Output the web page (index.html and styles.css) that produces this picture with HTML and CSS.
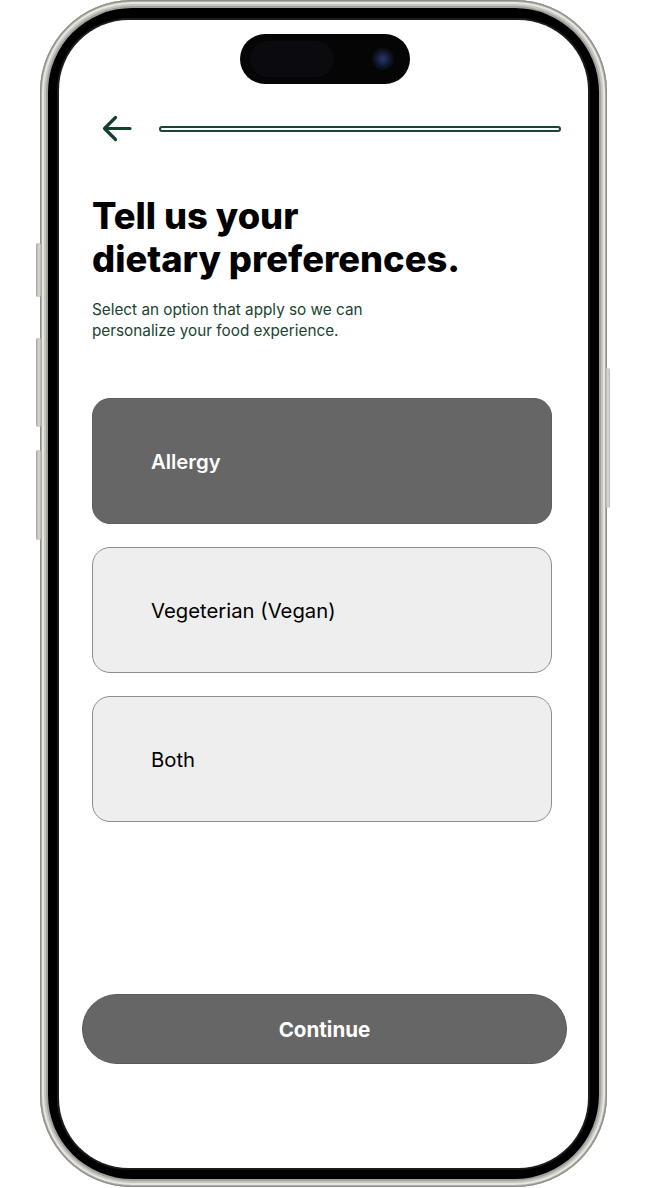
FILE: index.html
```html
<!DOCTYPE html>
<html lang="en">
<head>
<meta charset="utf-8">
<title>Dietary preferences</title>
<link rel="stylesheet" href="styles.css">
</head>
<body>
<div class="phone">
  <span class="side-btn action"></span>
  <span class="side-btn vol-up"></span>
  <span class="side-btn vol-down"></span>
  <span class="side-btn power"></span>
  <div class="bezel">
    <div class="screen">
      <div class="island"><span class="island-pill"></span><span class="camera"></span></div>
      <header class="topbar">
        <svg class="back" width="30" height="28" viewBox="0 0 30 28" aria-label="Back">
          <path d="M28 13.5H3M13.5 2.5L2.5 13.5L13.5 24.5" fill="none" stroke="#134129" stroke-width="3.2" stroke-linecap="round" stroke-linejoin="round"/>
        </svg>
        <div class="progress"></div>
      </header>
      <main class="content">
        <h1 class="title">Tell us your<br>dietary preferences.</h1>
        <p class="subtitle">Select an option that apply so we can<br>personalize your food experience.</p>
        <div class="options">
          <div class="option selected">Allergy</div>
          <div class="option">Vegeterian (Vegan)</div>
          <div class="option">Both</div>
        </div>
      </main>
      <div class="footer">
        <button class="continue">Continue</button>
      </div>
    </div>
  </div>
</div>
</body>
</html>
```

FILE: styles.css
```css
* { box-sizing: border-box; }
html, body { margin: 0; padding: 0; background: #ffffff; }
body { width: 649px; height: 1188px; overflow: hidden; font-family: Inter, "Noto Sans", sans-serif; }

.phone {
  position: relative;
  margin-left: 40px;
  width: 567px;
  height: 1187px;
  border-radius: 92px;
  padding: 8px;
  background: #c4c2bc;
  box-shadow:
    inset 0 0 0 1px #8f8d88,
    inset 0 0 0 2px #aeaca7,
    inset 0 0 0 4px #e8e6e0,
    inset 0 0 0 6px #c7c5bf,
    inset 0 0 0 8px #a3a19c;
}
.side-btn {
  position: absolute;
  width: 5px;
  background: linear-gradient(90deg, #a3a19c, #dedcd6 60%, #b5b3ae);
  border-radius: 2px;
}
.action { left: -4px; top: 243px; height: 54px; }
.vol-up { left: -4px; top: 338px; height: 89px; }
.vol-down { left: -4px; top: 450px; height: 90px; }
.power { right: -3px; top: 368px; height: 140px; }

.bezel {
  width: 100%;
  height: 100%;
  background: #000;
  border-radius: 84px;
  padding: 12px 11px 11px 11px;
}
.screen {
  width: 100%;
  height: 100%;
  background: #fff;
  border-radius: 70px;
  display: flex;
  flex-direction: column;
  overflow: hidden;
  box-shadow: 0 0 0 2px #1c1c1c;
}
.island {
  align-self: center;
  margin-top: 14px;
  margin-left: 2px;
  width: 170px;
  height: 50px;
  border-radius: 25px;
  background: #050505;
  display: flex;
  align-items: center;
  justify-content: space-between;
  padding: 0 16px 0 10px;
  flex-shrink: 0;
}
.island-pill { width: 84px; height: 36px; border-radius: 18px; background: #0b0b0f; }
.camera {
  width: 22px; height: 22px; border-radius: 50%;
  background: radial-gradient(circle at 50% 50%, #2a3a6a 0, #1a2246 30%, #0c0e1a 60%, #070709 100%);
}
.topbar {
  display: flex;
  align-items: center;
  margin-top: 31px;
  padding-left: 43px;
  height: 28px;
  flex-shrink: 0;
}
.back { display: block; flex-shrink: 0; }
.progress {
  margin-left: 27px;
  width: 402px;
  height: 6px;
  border: 2px solid #17452f;
  border-radius: 3px;
  background: #fdfdfd;
}
.content {
  padding: 0 36px 0 33px;
  flex-shrink: 0;
}
.title {
  margin: 52px 0 0;
  font-size: 36.3px;
  line-height: 43px;
  font-weight: 800;
  letter-spacing: 0;
  color: #000;
}
.subtitle {
  margin: 18px 0 0;
  font-size: 15.3px;
  line-height: 21px;
  color: #1a4431;
}
.options {
  margin-top: 57px;
  display: flex;
  flex-direction: column;
  gap: 23px;
}
.option {
  height: 126px;
  border-radius: 18px;
  background: #eeeeee;
  border: 1px solid #8d8d8d;
  display: flex;
  align-items: center;
  padding-left: 58px;
  font-size: 20.3px;
  color: #000;
}
.option.selected {
  background: #666666;
  border-color: #5e5e5e;
  color: #fff;
  font-weight: 600;
}
.footer {
  margin-top: auto;
  padding: 0 21px 104px 23px;
}
.continue {
  display: block;
  width: 485px;
  height: 70px;
  border: 1px solid #5a5a5a;
  border-radius: 35px;
  background: #666666;
  color: #fff;
  font-family: Inter, "Noto Sans", sans-serif;
  font-size: 20.6px;
  font-weight: 700;
}
```
